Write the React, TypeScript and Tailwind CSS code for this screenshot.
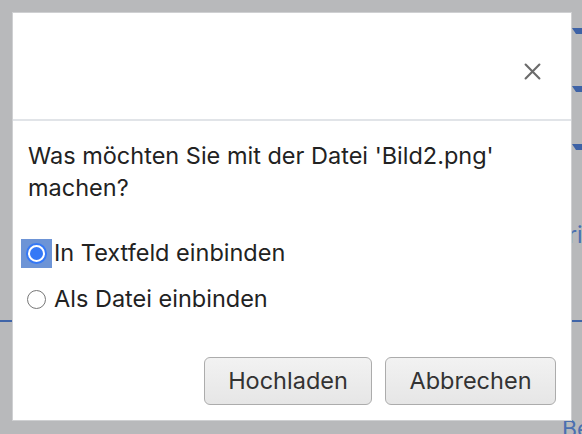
import { useState } from 'react'

export default function App() {
  const [choice, setChoice] = useState<'inline' | 'file'>('inline')

  return (
    <div className="relative w-[582px] h-[434px] overflow-hidden bg-[#b8b9bb] font-['Inter','Liberation_Sans',sans-serif]">
      {/* page behind the modal */}
      <div className="absolute left-0 right-0 top-[320px] h-[2px] bg-[#4065a8]" />
      {[28, 86, 144].map(y => (
        <svg key={y} className="absolute left-[572px]" style={{ top: y }} width="10" height="6" viewBox="0 0 10 6">
          <polygon points="0,0 10,0 10,6 4,6" fill="#3d62a6" />
        </svg>
      ))}
      <div className="absolute left-[568px] top-[220px] text-[23px] leading-[30px] text-[#4a6fb0]">ri</div>
      <div className="absolute left-[562px] top-[414px] text-[23px] leading-[30px] text-[#4a6fb0]">Be</div>

      {/* dialog */}
      <div className="absolute left-[12px] top-[12px] w-[560px] h-[409px] bg-white border border-[#cfd0d2] flex flex-col">
        <div className="h-[108px] border-b-2 border-[#e1e4e8] flex items-center justify-end pr-[30px] pt-[10px]">
          <button className="w-[18px] h-[18px] flex items-center justify-center">
            <svg width="17" height="17" viewBox="0 0 16 16">
              <path d="M1.5 1.5 L14.5 14.5 M14.5 1.5 L1.5 14.5" stroke="#6b6b6b" strokeWidth="2" strokeLinecap="round" />
            </svg>
          </button>
        </div>

        <div className="flex-1 flex flex-col px-[15px] pt-[19px] pb-[15px]">
          <p className="text-[23.5px] leading-[32px] text-[#222]">
            Was möchten Sie mit der Datei 'Bild2.png' machen?
          </p>

          <div className="mt-[26px] flex flex-col">
            <label className="h-[46px] flex items-center cursor-pointer" onClick={() => setChoice('inline')}>
              <span className={`-ml-[7px] w-[31px] h-[29px] flex items-center justify-center ${choice === 'inline' ? 'bg-[#6d94d6]' : ''}`}>
                {choice === 'inline' ? (
                  <span className="w-[21px] h-[21px] rounded-full bg-white flex items-center justify-center border-[2.5px] border-[#3478f6]">
                    <span className="w-[13px] h-[13px] rounded-full bg-[#3478f6]" />
                  </span>
                ) : (
                  <span className="w-[19px] h-[19px] rounded-full bg-white border border-[#777]" />
                )}
              </span>
              <span className="ml-[2px] text-[23.5px] text-[#222]">In Textfeld einbinden</span>
            </label>
            <label className="h-[46px] flex items-center cursor-pointer" onClick={() => setChoice('file')}>
              <span className={`-ml-[7px] w-[31px] h-[29px] flex items-center justify-center ${choice === 'file' ? 'bg-[#6d94d6]' : ''}`}>
                {choice === 'file' ? (
                  <span className="w-[21px] h-[21px] rounded-full bg-white flex items-center justify-center border-[2.5px] border-[#3478f6]">
                    <span className="w-[13px] h-[13px] rounded-full bg-[#3478f6]" />
                  </span>
                ) : (
                  <span className="w-[19px] h-[19px] rounded-full bg-white border border-[#777]" />
                )}
              </span>
              <span className="ml-[2px] text-[23.5px] text-[#222]">Als Datei einbinden</span>
            </label>
          </div>

          <div className="mt-auto flex justify-end gap-[13px]">
            <button className="w-[168px] h-[48px] rounded-[6px] border border-[#acacac] bg-gradient-to-b from-[#f2f2f2] to-[#e6e6e6] text-[23.5px] text-[#333]">
              Hochladen
            </button>
            <button className="w-[171px] h-[48px] rounded-[6px] border border-[#acacac] bg-gradient-to-b from-[#f2f2f2] to-[#e6e6e6] text-[23.5px] text-[#333]">
              Abbrechen
            </button>
          </div>
        </div>
      </div>
    </div>
  )
}
